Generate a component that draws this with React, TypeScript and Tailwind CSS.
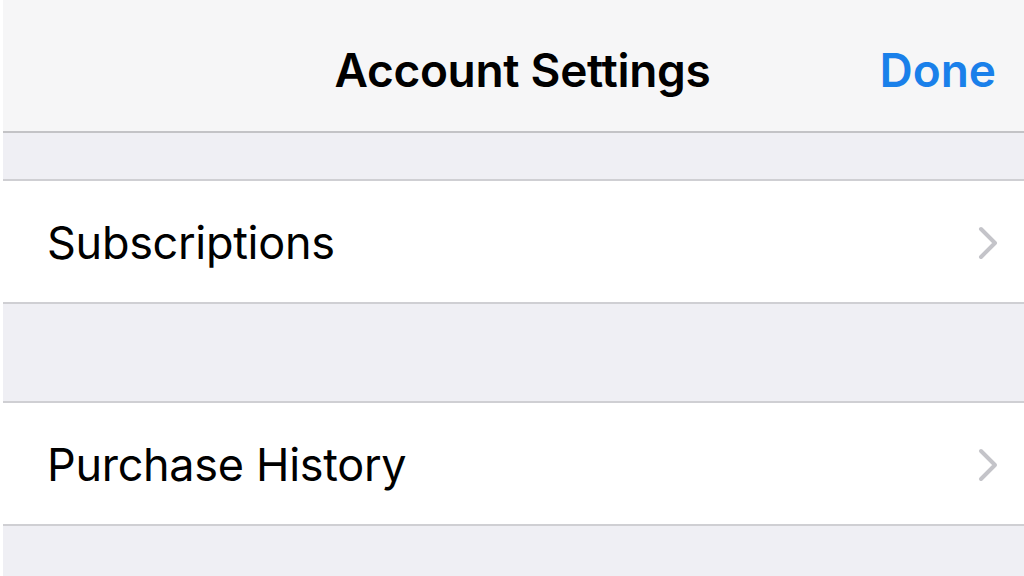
function Row({ label }: { label: string }) {
  return (
    <div className="flex h-[121px] shrink-0 items-center justify-between bg-white pl-[44px] pr-[22px] pt-[2px]">
      <span className="text-[45px] text-black tracking-[-0.3px]">{label}</span>
      <svg width="26" height="36" viewBox="0 0 26 36" className="text-[#c4c4c9]">
        <path d="M5 4 L19 18 L5 32" fill="none" stroke="currentColor" strokeWidth="4" strokeLinecap="round" strokeLinejoin="round" />
      </svg>
    </div>
  );
}

export default function App() {
  return (
    <div
      className="flex h-[576px] w-[1024px] flex-col overflow-hidden bg-white pl-[3px]"
      style={{ fontFamily: "Inter, 'Liberation Sans', sans-serif" }}
    >
      <header className="relative flex h-[133px] shrink-0 items-center justify-center border-b-2 border-[#c3c3c6] bg-[#f6f6f7] pl-[18px] pt-[10px]">
        <h1 className="text-[46px] font-semibold text-black tracking-[-0.3px]">Account Settings</h1>
        <button className="absolute right-[28px] top-[70px] -translate-y-1/2 text-[46px] font-semibold text-[#1a80ea]">
          Done
        </button>
      </header>
      <div className="h-[48px] shrink-0 border-b-2 border-[#cfcfd3] bg-[#efeff4]" />
      <Row label="Subscriptions" />
      <div className="h-[101px] shrink-0 border-y-2 border-[#cfcfd3] bg-[#efeff4]" />
      <Row label="Purchase History" />
      <div className="flex-1 border-t-2 border-[#cfcfd3] bg-[#efeff4]" />
    </div>
  );
}
